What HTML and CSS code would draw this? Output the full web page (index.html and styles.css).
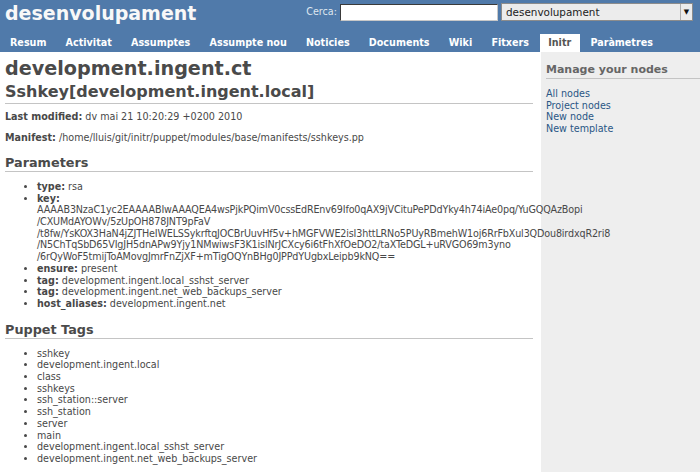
FILE: index.html
```html
<!DOCTYPE html>
<html>
<head>
<meta charset="utf-8">
<link rel="stylesheet" href="styles.css">
</head>
<body>
<div class="header">
  <div class="top">
    <h1 class="site-title">desenvolupament</h1>
    <div class="search">
      <span class="search-label">Cerca:</span>
      <span class="search-input"></span>
      <span class="select">
        <span class="select-text">desenvolupament</span>
        <span class="select-arrow">&#9660;</span>
      </span>
    </div>
  </div>
  <ul class="menu">
    <li><a class="tab">Resum</a></li>
    <li><a class="tab">Activitat</a></li>
    <li><a class="tab">Assumptes</a></li>
    <li><a class="tab">Assumpte nou</a></li>
    <li><a class="tab">Noticies</a></li>
    <li><a class="tab">Documents</a></li>
    <li><a class="tab">Wiki</a></li>
    <li><a class="tab">Fitxers</a></li>
    <li><a class="tab selected">Initr</a></li>
    <li><a class="tab">Paràmetres</a></li>
  </ul>
</div>
<div class="main">
  <div class="content">
    <h2 class="node-title">development.ingent.ct</h2>
    <h3 class="resource-title">Sshkey[development.ingent.local]</h3>
    <p class="meta"><b>Last modified:</b> dv mai 21 10:20:29 +0200 2010</p>
    <p class="meta"><b>Manifest:</b> /home/lluis/git/initr/puppet/modules/base/manifests/sshkeys.pp</p>
    <h3 class="section">Parameters</h3>
    <ul class="list">
      <li><b>type:</b> rsa</li>
      <li><b>key:</b><br><span class="key">AAAAB3NzaC1yc2EAAAABIwAAAQEA4wsPjkPQimV0cssEdREnv69Ifo0qAX9jVCituPePDdYky4h74iAe0pq/YuGQQAzBopi<br>/CXUMdAYOWv/5zUpOH878JNT9pFaV<br>/t8fw/YsKOX3HaN4jZJTHeIWELSSykrftqJOCBrUuvHf5v+hMGFVWE2isI3httLRNo5PUyRBmehW1oj6RrFbXul3QDou8irdxqR2ri8<br>/N5ChTqSbD65VIgJH5dnAPw9Yjy1NMwiwsF3K1islNrJCXcy6i6tFhXfOeDO2/taXTeDGL+uRVGO69m3yno<br>/6rQyWoF5tmijToAMovgJmrFnZjXF+mTigOQYnBHg0JPPdYUgbxLeipb9kNQ==</span></li>
      <li><b>ensure:</b> present</li>
      <li><b>tag:</b> development.ingent.local_sshst_server</li>
      <li><b>tag:</b> development.ingent.net_web_backups_server</li>
      <li><b>host_aliases:</b> development.ingent.net</li>
    </ul>
    <h3 class="section">Puppet Tags</h3>
    <ul class="list">
      <li>sshkey</li>
      <li>development.ingent.local</li>
      <li>class</li>
      <li>sshkeys</li>
      <li>ssh_station::server</li>
      <li>ssh_station</li>
      <li>server</li>
      <li>main</li>
      <li>development.ingent.local_sshst_server</li>
      <li>development.ingent.net_web_backups_server</li>
    </ul>
  </div>
  <div class="sidebar">
    <h3 class="side-title">Manage your nodes</h3>
    <div class="side-links">
      <a class="side-link">All nodes</a>
      <a class="side-link">Project nodes</a>
      <a class="side-link">New node</a>
      <a class="side-link">New template</a>
    </div>
  </div>
</div>
</body>
</html>
```
FILE: styles.css
```css
html, body {
  margin: 0;
  padding: 0;
}
body {
  font-family: "DejaVu Sans", Verdana, sans-serif;
  font-size: 9.6px;
  line-height: 11.7px;
  color: #484848;
  background: #fff;
  width: 700px;
  height: 472px;
  overflow: hidden;
}
.header {
  background: #507aaa;
  color: #f8f8f8;
  height: 52px;
  display: flex;
  flex-direction: column;
}
.top {
  display: flex;
  justify-content: space-between;
  align-items: flex-start;
}
.site-title {
  margin: 0;
  padding: 1px 0 0 5px;
  font-size: 19px;
  line-height: 24px;
  font-weight: bold;
  color: #f8f8f8;
}
.search {
  display: flex;
  align-items: center;
  padding-top: 3px;
  padding-right: 7px;
}
.search-label {
  color: #dfe6ef;
  margin-right: 3px;
}
.search-input {
  width: 156px;
  height: 15px;
  background: #fff;
  border: 1px solid #3a3a3a;
  border-right-color: #c8c8c8;
  border-bottom-color: #c8c8c8;
  margin-right: 3px;
}
.select {
  display: flex;
  align-items: stretch;
  width: 190px;
  height: 16px;
  background: #ececec;
  border: 1px solid #8c8c8c;
  color: #222;
}
.select-text {
  flex: 1;
  font-size: 10.4px;
  line-height: 16px;
  padding-left: 4px;
}
.select-arrow {
  width: 11px;
  border-left: 1px solid #b0b0b0;
  font-size: 7px;
  line-height: 16px;
  text-align: center;
  color: #111;
}
.menu {
  list-style: none;
  margin: auto 0 0 0;
  padding: 0 0 0 1.4px;
  display: flex;
}
.menu li {
  margin-right: 2px;
}
.tab {
  display: block;
  padding: 0 8.6px;
  line-height: 18px;
  height: 18px;
  font-weight: bold;
  color: #fff;
}
.tab.selected {
  background: #fff;
  color: #555;
}
.main {
  display: grid;
  grid-template-columns: 1fr 159px;
  min-height: 420px;
  background: linear-gradient(to left, #eeeeee 159px, #ffffff 159px);
}
.content {
  padding: 5px 8px 0 5px;
  min-width: 0;
}
.node-title {
  margin: 0;
  font-size: 19.2px;
  line-height: 23px;
  color: #4a4a4a;
}
.resource-title {
  margin: 2px 0 0 0;
  font-size: 16px;
  line-height: 19px;
  padding-bottom: 2px;
  border-bottom: 1px solid #c4c4c4;
  color: #4a4a4a;
}
.meta {
  margin: 7px 0 9.5px 0;
}
.meta b, .list b {
  color: #484848;
}
.section {
  margin: 11px 0 0 0;
  font-size: 12.8px;
  line-height: 15px;
  padding-bottom: 1px;
  border-bottom: 1px solid #c4c4c4;
  color: #4a4a4a;
}
.list {
  margin: 9px 0 12px 0;
  padding-left: 32px;
}
.list li {
  white-space: nowrap;
}
.key {
  letter-spacing: -0.15px;
}
.sidebar {
  padding: 11px 0 0 5px;
}
.side-title {
  margin: 0;
  font-size: 11px;
  line-height: 14px;
  padding-bottom: 1px;
  border-bottom: 1px solid #c4c4c4;
  color: #666;
}
.side-links {
  margin-top: 9px;
  display: flex;
  flex-direction: column;
  align-items: flex-start;
}
.side-link {
  color: #2a5685;
}
```
